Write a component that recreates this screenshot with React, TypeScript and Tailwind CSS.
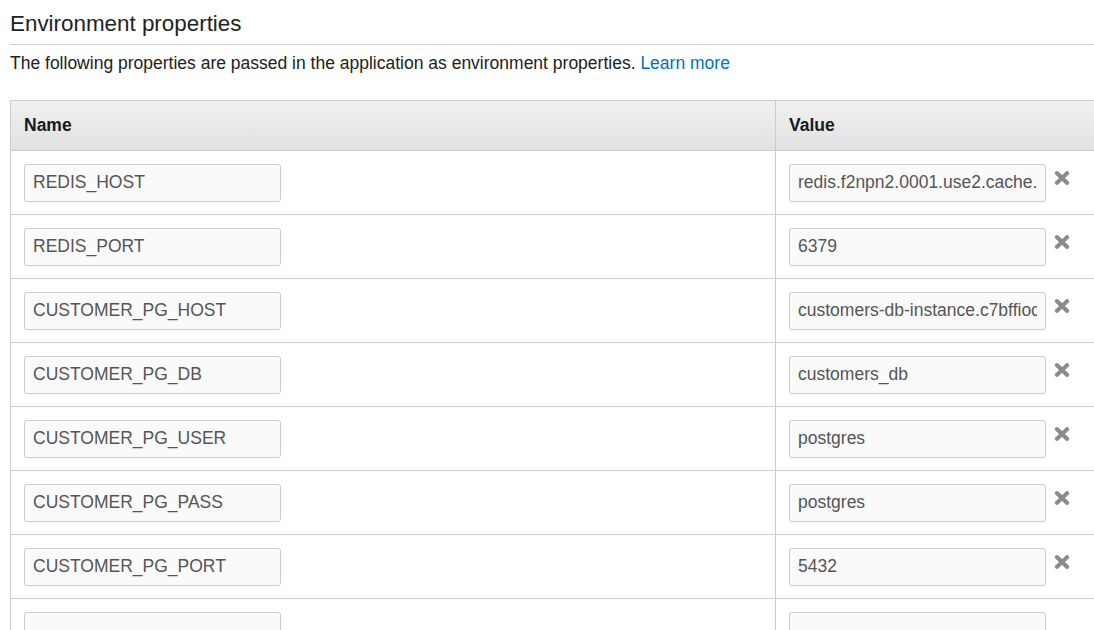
const ROWS: [string, string][] = [
  ['REDIS_HOST', 'redis.f2npn2.0001.use2.cache.amazonaws.com'],
  ['REDIS_PORT', '6379'],
  ['CUSTOMER_PG_HOST', 'customers-db-instance.c7bffiocxyz.us-east-2.rds.amazonaws.com'],
  ['CUSTOMER_PG_DB', 'customers_db'],
  ['CUSTOMER_PG_USER', 'postgres'],
  ['CUSTOMER_PG_PASS', 'postgres'],
  ['CUSTOMER_PG_PORT', '5432'],
];

function RemoveIcon() {
  return (
    <svg viewBox="0 0 16 14" className="-mt-[10px] h-[14px] w-[16px] shrink-0" aria-hidden>
      <path d="M3 2.2 L13 11.8 M13 2.2 L3 11.8" stroke="#8c8c8c" strokeWidth="4.2" strokeLinecap="round" />
    </svg>
  );
}

function Field({ value }: { value: string }) {
  return (
    <input
      readOnly
      value={value}
      className="block h-[38px] w-[257px] rounded-[3px] border border-[#cccccc] bg-[#fafafa] px-2 text-[17.5px] text-[#555555] outline-none"
    />
  );
}

export default function App() {
  return (
    <div className="h-[630px] w-[1094px] overflow-hidden bg-white pl-[10px] font-['Liberation_Sans',Arial,sans-serif] text-[#222222]">
      <h2 className="pt-[10px] pb-[7px] text-[22.4px] leading-[27px] font-normal">Environment properties</h2>
      <div className="border-t border-[#cccccc]" />
      <p className="mt-[7px] text-[17.5px] leading-[22px]">
        The following properties are passed in the application as environment properties.{' '}
        <a className="text-[#0073bb]">Learn more</a>
      </p>
      <table className="mt-[26px] w-[1110px] border-collapse">
        <thead>
          <tr className="h-[50px] bg-gradient-to-b from-[#f1f1f1] to-[#e1e1e1]">
            <th className="w-[765px] border border-[#cccccc] px-[13px] text-left text-[17.5px] font-bold text-[#16191f]">
              Name
            </th>
            <th className="border border-[#cccccc] px-[13px] text-left text-[17.5px] font-bold text-[#16191f]">
              Value
            </th>
          </tr>
        </thead>
        <tbody>
          {ROWS.map(([name, value]) => (
            <tr key={name} className="h-[64px]">
              <td className="border border-[#cccccc] px-[13px]">
                <Field value={name} />
              </td>
              <td className="border border-[#cccccc] px-[13px]">
                <div className="flex items-center gap-[8px]">
                  <Field value={value} />
                  <RemoveIcon />
                </div>
              </td>
            </tr>
          ))}
          <tr className="h-[64px]">
            <td className="border border-[#cccccc] px-[13px]">
              <Field value="" />
            </td>
            <td className="border border-[#cccccc] px-[13px]">
              <Field value="" />
            </td>
          </tr>
        </tbody>
      </table>
    </div>
  );
}
